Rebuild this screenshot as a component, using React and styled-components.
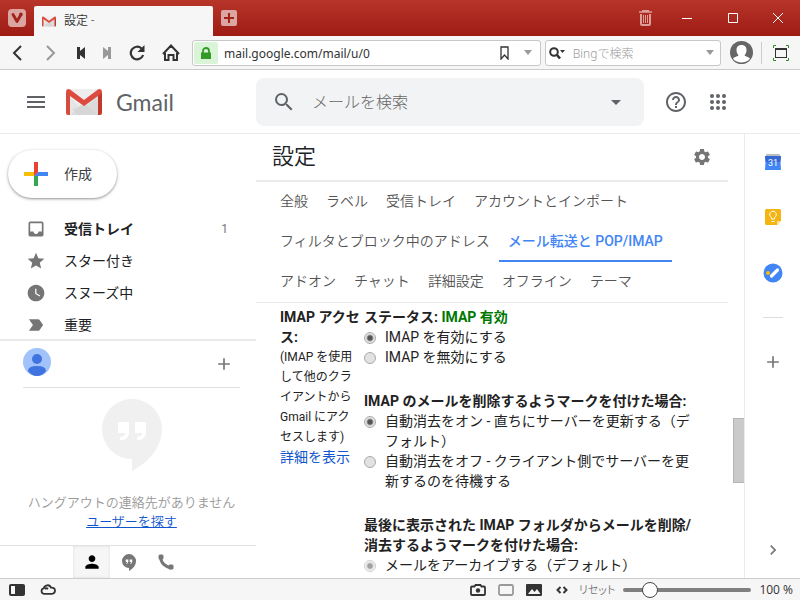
import { useState } from 'react'
import styled, { createGlobalStyle } from 'styled-components'
import {
  MdMenu, MdSearch, MdArrowDropDown, MdHelpOutline, MdInbox, MdStar,
  MdWatchLater, MdLabelImportant, MdSettings, MdPerson, MdAdd, MdChevronRight,
} from 'react-icons/md'

const GlobalStyle = createGlobalStyle`
  * { box-sizing: border-box; }
  body {
    margin: 0;
    background: #fff;
    color: #222;
    font: 14px/20px Roboto, 'Noto Sans CJK JP', sans-serif;
  }
  button, input { font: inherit; color: inherit; }
  button { border: 0; padding: 0; background: none; cursor: pointer; }
  svg { display: block; flex: none; }
`

const Window = styled.div`
  display: flex;
  flex-direction: column;
  height: 100vh;
  overflow: hidden;
`

/* ---- browser frame ---- */

const TitleBar = styled.div`
  display: flex;
  align-items: center;
  height: 36px;
  flex: none;
  padding-left: 8px;
  background: linear-gradient(#b73529, #9e1b15);
`

const Tab = styled.div`
  display: flex;
  align-items: center;
  align-self: flex-end;
  gap: 8px;
  width: 179px;
  height: 30px;
  margin: 0 8px;
  padding-left: 8px;
  border-radius: 2px 2px 0 0;
  background: #f6f6f6;
  color: #333;
  font-size: 12px;
  font-weight: 350;
`

const Spacer = styled.div`
  flex: 1;
`

const WindowButton = styled.button`
  display: flex;
  align-items: center;
  justify-content: center;
  width: ${(p) => p.$width || 46}px;
  height: 36px;
`

const ToolBar = styled.div`
  display: flex;
  align-items: center;
  flex: none;
  height: 34px;
  border-bottom: 1px solid #ccc;
  background: #f6f6f6;
`

const ToolButton = styled.button`
  display: flex;
  align-items: center;
  justify-content: center;
  width: ${(p) => p.$width || 34}px;
  height: 32px;
  color: ${(p) => (p.$dim ? '#999' : '#333')};
`

const Field = styled.div`
  display: flex;
  align-items: center;
  flex: ${(p) => p.$grow} 1 0;
  min-width: 0;
  height: 26px;
  margin-left: 4px;
  padding: 1px;
  border: 1px solid #c8c8c8;
  border-radius: 3px;
  background: #fff;
`

const Lock = styled.div`
  display: flex;
  align-items: center;
  justify-content: center;
  width: 24px;
  height: 22px;
  border-radius: 2px;
  background: #daf4d8;
`

const FieldInput = styled.input`
  flex: 1;
  min-width: 0;
  margin-left: 6px;
  padding: 2px 0 0;
  border: 0;
  outline: 0;
  background: none;
  color: #333;
  font: 12px/20px 'Noto Sans', 'Noto Sans CJK JP', sans-serif;
  &::placeholder { color: #999; opacity: 1; font-weight: 300; }
`

const Divider = styled.div`
  width: 1px;
  height: 22px;
  background: #ccc;
`

const StatusBar = styled.footer`
  display: flex;
  align-items: center;
  flex: none;
  height: 22px;
  padding-right: 7px;
  border-top: 1px solid #ccc;
  background: #f6f6f6;
  color: #333;
  font: 12px/20px 'Open Sans', 'Noto Sans CJK JP', sans-serif;
`

const StatusButton = styled.button`
  display: flex;
  align-items: center;
  justify-content: center;
  width: ${(p) => p.$width || 28}px;
  height: 21px;
`

const ResetButton = styled.button`
  margin: 0 8px 0 3px;
  color: #777;
  font-size: 11px;
  font-weight: 350;
  font-feature-settings: 'palt';
`

const Zoom = styled.input`
  width: 128px;
  height: 18px;
  margin: 0 8px 0 0;
  appearance: none;
  background: none;
  &::-webkit-slider-runnable-track {
    height: 4px;
    border-radius: 2px;
    background: #808080;
  }
  &::-webkit-slider-thumb {
    appearance: none;
    width: 16px;
    height: 16px;
    margin-top: -6px;
    border: 1px solid #444;
    border-radius: 50%;
    background: #fff;
  }
`

/* ---- mail header ---- */

const Header = styled.header`
  display: flex;
  align-items: center;
  flex: none;
  height: 64px;
  border-bottom: 1px solid #ebebeb;
  color: #5f6368;
`

const Brand = styled.div`
  display: flex;
  align-items: center;
  flex: none;
  width: 256px;
  padding-left: 24px;
`

const BrandLink = styled.a`
  display: flex;
  align-items: center;
  gap: 14px;
  margin-left: 18px;
  color: #5f6368;
  font: 23px/28px Lato, sans-serif;
  text-decoration: none;
`

const SearchBox = styled.form`
  display: flex;
  align-items: center;
  flex: 1;
  min-width: 0;
  height: 48px;
  padding: 0 16px;
  border-radius: 8px;
  background: #f1f3f4;
`

const SearchInput = styled.input`
  flex: 1;
  min-width: 0;
  margin-left: 16px;
  padding: 2px 0 0;
  border: 0;
  outline: 0;
  background: none;
  font-size: 16px;
  line-height: 24px;
  &::placeholder { color: #666; opacity: 1; font-weight: 300; }
`

const HeaderTools = styled.div`
  display: flex;
  gap: 18px;
  flex: none;
  width: 156px;
  padding-left: 20px;
`

/* ---- sidebar ---- */

const Body = styled.div`
  display: flex;
  flex: 1;
  min-height: 0;
`

const Sidebar = styled.aside`
  display: flex;
  flex-direction: column;
  flex: none;
  width: 256px;
`

const Compose = styled.button`
  display: flex;
  align-items: center;
  align-self: flex-start;
  gap: 16px;
  flex: none;
  height: 48px;
  margin: 16px 0 15px 8px;
  padding: 0 25px 0 16px;
  border-radius: 24px;
  background: #fff;
  box-shadow: 0 1px 2px rgba(60, 64, 67, 0.4), 0 1px 3px 1px rgba(60, 64, 67, 0.15);
  color: #3c4043;
`

const Folders = styled.nav`
  flex: 1;
  min-height: 0;
  overflow: hidden;
`

const Folder = styled.a`
  display: flex;
  align-items: center;
  height: 32px;
  padding: 0 28px 0 26px;
  color: #202124;
  font-weight: ${(p) => (p.$active ? 700 : 400)};
  text-decoration: none;
  svg { color: #757575; }
`

const FolderName = styled.span`
  flex: 1;
  margin-left: 18px;
`

const Count = styled.span`
  color: #757575;
  font-size: 12px;
  font-weight: 400;
`

const Hangouts = styled.section`
  flex: none;
  border-top: 2px solid #ebebeb;
  text-align: center;
`

const HangoutsHead = styled.div`
  display: flex;
  justify-content: space-between;
  height: 47px;
  margin: 0 16px 11px 23px;
  padding: 7px 6px 0 0;
  border-bottom: 1px solid #e0e0e0;
  color: #777;
`

const AddButton = styled.button`
  height: 32px;
`

const HangoutsLogo = styled.div`
  display: flex;
  justify-content: center;
  padding-left: 8px;
`

const Empty = styled.p`
  margin: 22px 0 14px;
  padding-left: 7px;
  color: #999;
  font-size: 13px;
  font-weight: 350;
  line-height: 19px;
  a { color: #15c; }
`

const HangoutsTabs = styled.div`
  display: flex;
  height: 33px;
  padding-left: 73px;
  border-top: 1px solid #e0e0e0;
  color: #777;
`

const HangoutsTab = styled.button`
  display: flex;
  align-items: center;
  justify-content: center;
  width: 37px;
  ${(p) => p.$active && `
    background: #f6f6f6;
    box-shadow: inset 0 0 3px #ddd;
    color: #000;
  `}
`

/* ---- settings ---- */

const Main = styled.main`
  flex: 1;
  min-width: 0;
  overflow: hidden;
`

const TitleRow = styled.div`
  display: flex;
  align-items: center;
  justify-content: space-between;
  height: 48px;
  padding: 0 16px;
  border-bottom: 2px solid #ebebeb;
  color: #757575;
`

const Title = styled.h1`
  margin: 0;
  color: #202124;
  font-size: 22px;
  font-weight: 350;
  line-height: 28px;
`

const Tabs = styled.nav`
  display: flex;
  flex-wrap: wrap;
  padding-left: 15px;
  border-bottom: 1px solid #ebebeb;
`

const TabLink = styled.a`
  height: 40px;
  padding: 9px 9px 0;
  color: ${(p) => (p.$active ? '#4285f4' : '#555')};
  border-bottom: 2px solid ${(p) => (p.$active ? '#4285f4' : 'transparent')};
  font-weight: ${(p) => (p.$active ? 500 : 350)};
  text-decoration: none;
`

const Settings = styled.div`
  display: grid;
  grid-template-columns: 82px 1fr;
  column-gap: 2px;
  padding: 4px 28px 0 24px;
  color: #222;
`

const About = styled.div`
  a { color: #15c; text-decoration: none; }
`

const AboutTitle = styled.h2`
  margin: 0;
  font-size: 14px;
  line-height: 20px;
`

const Hint = styled.p`
  margin: 0;
  padding-right: 6px;
  font-size: 12px;
`

const Group = styled.fieldset`
  min-width: 0;
  margin: 0 0 24px;
  padding: 0;
  border: 0;
`

const Legend = styled.legend`
  padding: 0;
  font-weight: 700;
`

const Status = styled.span`
  color: #007700;
`

const Option = styled.label`
  display: flex;
  gap: 9px;
  padding-right: 4px;
`

const Radio = styled.input`
  appearance: none;
  flex: none;
  width: 12px;
  height: 12px;
  margin: 5px 0 0;
  border: 1px solid #aaa;
  border-radius: 50%;
  background: #e2e2e2;
  &:checked { background: radial-gradient(circle, #555 0 2px, #e6e6e6 4px); }
  &:disabled { opacity: 0.55; }
`

const Scrollbar = styled.div`
  display: flex;
  flex-direction: column;
  flex: none;
  width: 16px;
  padding-left: 5px;
  &::before { content: ''; flex: 3; }
  &::after { content: ''; flex: 1; }
`

const Thumb = styled.div`
  height: 65px;
  border: 1px solid #b5b5b5;
  border-right: 0;
  background: #cacaca;
`

const SidePanel = styled.aside`
  display: flex;
  flex-direction: column;
  align-items: center;
  flex: none;
  width: 56px;
  padding: 19px 0 18px;
  border-left: 1px solid #ebebeb;
  color: #777;
`

const Apps = styled.div`
  display: flex;
  flex-direction: column;
  align-items: center;
  gap: 38px;
`

const PanelRule = styled.hr`
  width: 20px;
  margin: 34px 0;
  border: 0;
  border-top: 1px solid #ddd;
`

/* ---- drawings ---- */

function MailLogo({ width, height }) {
  return (
    <svg width={width} height={height} viewBox="0 0 36 26">
      <path d="M2 0h32v26H2z" fill="#eee" />
      <path d="M4 26 18 13l14 13z" fill="#ddd" />
      <path d="M4 8l9 9-9 9zM32 8l-9 9 9 9z" fill="#e6e6e6" />
      <path d="M18 16 32 6v20H12l-6-6z" fill="#d0d0d0" opacity=".5" />
      <path d="M0 3v21q0 2 2 2h2V6z" fill="#d54b3d" />
      <path d="M36 3v21q0 2-2 2h-2V6z" fill="#c0392b" />
      <path d="M0 2.5Q0 0 2.4 0q1 0 2 .8L18 11 31.6 .8q1-.8 2-.8Q36 0 36 2.5q0 1.5-1.2 2.5L18 17 1.2 5Q0 4 0 2.5z" fill="#dd4b3e" />
    </svg>
  )
}

function VivaldiLogo() {
  return (
    <svg width="18" height="18" viewBox="0 0 18 18">
      <rect width="18" height="18" rx="4" fill="#dba5a1" />
      <path d="M5 5.5 9 12.5l3.8-6.8" fill="none" stroke="#a3231b" strokeWidth="2.8" strokeLinecap="round" strokeLinejoin="round" />
      <circle cx="12.9" cy="5.4" r="1.8" fill="#a3231b" />
    </svg>
  )
}

function HangoutsIcon({ width, height, color, quote }) {
  return (
    <svg width={width} height={height} viewBox="0 0 60 72">
      <path d="M30 0a30 30 0 0 1 30 30c0 18-13 33-30 42V60A30 30 0 0 1 30 0z" fill={color} />
      <path d="M16 23h11v10q0 8-9 8.5V38q5-.5 5-4h-7zM33 23h11v10q0 8-9 8.5V38q5-.5 5-4h-7z" fill={quote} />
    </svg>
  )
}

function PhoneIcon() {
  return (
    <svg width="16" height="16" viewBox="0 0 16 16">
      <path d="M2.5 2.5Q3 8 6 10.5T13 14" fill="none" stroke="#777" strokeWidth="3" />
      <rect x=".5" y=".5" width="5" height="5" rx="1.5" fill="#777" />
      <rect x="10.5" y="10.5" width="5" height="5" rx="1.5" fill="#777" />
    </svg>
  )
}

function ComposePlus() {
  return (
    <svg width="24" height="24" viewBox="0 0 24 24">
      <path d="M10 0h4v10l-4 4z" fill="#ea4335" />
      <path d="M0 10h10v4H0z" fill="#fbbc04" />
      <path d="M10 14h4v10h-4z" fill="#34a853" />
      <path d="M14 10h10v4H10z" fill="#4285f4" />
      <path d="M10 10h4l-4 4z" fill="#ea4335" />
    </svg>
  )
}

function AppsIcon() {
  return (
    <svg width="24" height="24" viewBox="0 0 24 24" fill="currentColor">
      {[6, 12, 18].map((y) => [6, 12, 18].map((x) => <circle key={`${x}-${y}`} cx={x} cy={y} r="2" />))}
    </svg>
  )
}

function Caret() {
  return <svg width="8" height="5" viewBox="0 0 8 5"><path d="M0 0h8L4 5z" fill="#999" /></svg>
}

function CalendarIcon() {
  return (
    <svg width="16" height="18" viewBox="0 0 16 18">
      <path d="M1 2q0-1 1-1h12q1 0 1 1v3H1z" fill="#bdbdbd" />
      <path d="M0 3h16l-.6 5 .6 9H0l.6-9z" fill="#4285f4" />
      <path d="M0 3h16l-.6 6H.6z" fill="#3467d6" />
      <text x="8" y="13" fill="#fff" fontSize="9" fontFamily="Roboto" textAnchor="middle">31</text>
    </svg>
  )
}

function KeepIcon() {
  return (
    <svg width="16" height="16" viewBox="0 0 16 16">
      <path d="M1 0h14l1 1v11l-4 4H1l-1-1V1z" fill="#f4b512" />
      <path d="M12 16v-4h4z" fill="#fde49a" />
      <path d="M6.5 10V8.5a3.3 3.3 0 1 1 3 0V10zM6.5 12.5h3" fill="none" stroke="#fff" />
    </svg>
  )
}

function TasksIcon() {
  return (
    <svg width="20" height="20" viewBox="0 0 20 20">
      <circle cx="10" cy="10" r="9.5" fill="#4285f4" />
      <circle cx="5" cy="10" r="2" fill="#fbbc04" />
      <path d="M8.5 13 14.5 7" stroke="#fff" strokeWidth="3.2" strokeLinecap="round" />
    </svg>
  )
}

const folders = [
  { name: '受信トレイ', Icon: MdInbox, count: 1, active: true },
  { name: 'スター付き', Icon: MdStar },
  { name: 'スヌーズ中', Icon: MdWatchLater },
  { name: '重要', Icon: MdLabelImportant },
]

const tabs = [
  '全般', 'ラベル', '受信トレイ', 'アカウントとインポート',
  'フィルタとブロック中のアドレス', 'メール転送と POP/IMAP',
  'アドオン', 'チャット', '詳細設定', 'オフライン', 'テーマ',
]

function BrowserTop() {
  return (
    <>
      <TitleBar>
        <WindowButton $width={18} aria-label="Vivaldi"><VivaldiLogo /></WindowButton>
        <Tab><MailLogo width={14} height={11} />設定 -</Tab>
        <WindowButton $width={16} aria-label="新しいタブ">
          <svg width="16" height="16" viewBox="0 0 16 16">
            <rect width="16" height="16" rx="2" fill="#dba5a1" />
            <path d="M8 3v10M3 8h10" stroke="#a3231b" strokeWidth="2" />
          </svg>
        </WindowButton>
        <Spacer />
        <WindowButton $width={38} aria-label="ゴミ箱">
          <svg width="13" height="16" viewBox="0 0 13 16" fill="none" stroke="#dd9d98">
            <path d="M0 2h13M3 .5h7" strokeWidth="1.6" />
            <path d="M2 4v10q0 1 1 1h7q1 0 1-1V4" strokeWidth="2" />
            <path d="M4.5 5v8M6.5 5v8M8.5 5v8" />
          </svg>
        </WindowButton>
        <WindowButton aria-label="最小化">
          <svg width="10" height="10"><path d="M0 5.5h10" stroke="#fff" /></svg>
        </WindowButton>
        <WindowButton aria-label="最大化">
          <svg width="10" height="10"><path d="M.5.5h9v9h-9z" fill="none" stroke="#fff" /></svg>
        </WindowButton>
        <WindowButton $width={44} aria-label="閉じる">
          <svg width="10" height="10"><path d="M0 0l10 10M10 0 0 10" stroke="#fff" /></svg>
        </WindowButton>
      </TitleBar>
      <ToolBar>
        <ToolButton aria-label="戻る">
          <svg width="10" height="16" fill="none"><path d="M9 1 2 8l7 7" stroke="currentColor" strokeWidth="2" /></svg>
        </ToolButton>
        <ToolButton $dim aria-label="進む">
          <svg width="10" height="16" fill="none"><path d="m1 1 7 7-7 7" stroke="currentColor" strokeWidth="2" /></svg>
        </ToolButton>
        <ToolButton $width={26} aria-label="最初へ">
          <svg width="8" height="12" fill="currentColor"><path d="M0 0h3v4l5-4v12L3 8v4H0z" /></svg>
        </ToolButton>
        <ToolButton $width={26} $dim aria-label="最後へ">
          <svg width="8" height="12" fill="currentColor"><path d="M8 0H5v4L0 0v12l5-4v4h3z" /></svg>
        </ToolButton>
        <ToolButton aria-label="再読み込み">
          <svg width="16" height="16" fill="none">
            <path d="M12.5 3.5a6.3 6.3 0 1 0 1.6 6.5" stroke="currentColor" strokeWidth="2.2" />
            <path d="M15.5 0v7h-7z" fill="currentColor" />
          </svg>
        </ToolButton>
        <ToolButton aria-label="ホーム">
          <svg width="18" height="17" fill="none" stroke="currentColor" strokeWidth="2">
            <path d="M1 10 9 1.5 17 10M3 9v7h3.5v-5h5v5H15V9" />
          </svg>
        </ToolButton>
        <Field $grow={2}>
          <Lock>
            <svg width="10" height="12" fill="none">
              <path d="M0 5.5h10V12H0z" fill="#339a27" />
              <path d="M2 6V4a3 3 0 0 1 6 0v2" stroke="#339a27" strokeWidth="1.8" />
            </svg>
          </Lock>
          <FieldInput aria-label="アドレス" defaultValue="mail.google.com/mail/u/0" />
          <ToolButton $width={24} aria-label="ブックマーク">
            <svg width="9" height="14" fill="none"><path d="M1 1h7v12l-3.5-4L1 13z" stroke="currentColor" strokeWidth="1.3" /></svg>
          </ToolButton>
          <ToolButton $width={22} aria-label="履歴"><Caret /></ToolButton>
        </Field>
        <Field $grow={1}>
          <ToolButton $width={20} aria-label="検索エンジン">
            <svg width="16" height="12" fill="none" stroke="currentColor">
              <circle cx="5" cy="5" r="3.8" strokeWidth="2" />
              <path d="m8 8 3 3.5" strokeWidth="2.6" />
              <path d="M11 3h5l-2.5 3z" fill="currentColor" stroke="none" />
            </svg>
          </ToolButton>
          <FieldInput aria-label="ウェブ検索" placeholder="Bingで検索" />
          <ToolButton $width={18} aria-label="検索候補"><Caret /></ToolButton>
        </Field>
        <ToolButton $width={40} aria-label="プロフィール">
          <svg width="23" height="23" viewBox="0 0 23 23">
            <circle cx="11.5" cy="11.5" r="11.5" fill="#666" />
            <path d="M11.5 4c3.5 0 5 2.2 5 5.2 0 2.2-1 4-2 5 .3 1 4.2 1.5 5.5 3.5a11.5 11.5 0 0 1-17 0c1.3-2 5.2-2.5 5.5-3.5-1-1-2-2.8-2-5C6.5 6.2 8 4 11.5 4z" fill="#fff" />
          </svg>
        </ToolButton>
        <Divider />
        <ToolButton $width={38} aria-label="全画面">
          <svg width="16" height="16" viewBox="0 0 16 16" fill="none">
            <path d="M.5 3V.5H3M13 .5h2.500V3M.5 13v2.500H3M13 15.500h2.500V13" stroke="#2f8a25" />
            <path d="M2 3h12v10H2z" fill="#333" />
            <path d="M3 5h10v7H3z" fill="#f6f6f6" />
          </svg>
        </ToolButton>
      </ToolBar>
    </>
  )
}

function HangoutsPanel() {
  return (
    <Hangouts>
      <HangoutsHead>
        <svg width="28" height="28" viewBox="0 0 28 28">
          <circle cx="14" cy="14" r="14" fill="#a1c2fa" />
          <circle cx="14" cy="11" r="5" fill="#3f73df" />
          <path d="M5 23q0-5 9-5t9 5q-3.5 5-9 5t-9-5z" fill="#3f73df" />
        </svg>
        <AddButton aria-label="新しい会話"><MdAdd size={20} /></AddButton>
      </HangoutsHead>
      <HangoutsLogo><HangoutsIcon width={60} height={72} color="#f0f0f0" quote="#fff" /></HangoutsLogo>
      <Empty>
        ハングアウトの連絡先がありません<br />
        <a href="#find">ユーザーを探す</a>
      </Empty>
      <HangoutsTabs>
        <HangoutsTab $active aria-label="連絡先"><MdPerson size={20} /></HangoutsTab>
        <HangoutsTab aria-label="会話"><HangoutsIcon width={14} height={17} color="#777" quote="#fff" /></HangoutsTab>
        <HangoutsTab aria-label="電話"><PhoneIcon /></HangoutsTab>
      </HangoutsTabs>
    </Hangouts>
  )
}

function ImapSettings() {
  const [access, setAccess] = useState('on')
  const [expunge, setExpunge] = useState('auto')

  return (
    <Settings>
      <About>
        <AboutTitle>IMAP アクセス:</AboutTitle>
        <Hint>(IMAP を使用して他のクライアントから Gmail にアクセスします)</Hint>
        <a href="#more">詳細を表示</a>
      </About>
      <div>
        <Group>
          <Legend>ステータス: <Status>IMAP 有効</Status></Legend>
          <Option>
            <Radio type="radio" name="access" checked={access === 'on'} onChange={() => setAccess('on')} />
            IMAP を有効にする
          </Option>
          <Option>
            <Radio type="radio" name="access" checked={access === 'off'} onChange={() => setAccess('off')} />
            IMAP を無効にする
          </Option>
        </Group>
        <Group>
          <Legend>IMAP のメールを削除するようマークを付けた場合:</Legend>
          <Option>
            <Radio type="radio" name="expunge" checked={expunge === 'auto'} onChange={() => setExpunge('auto')} />
            自動消去をオン - 直ちにサーバーを更新する（デフォルト）
          </Option>
          <Option>
            <Radio type="radio" name="expunge" checked={expunge === 'wait'} onChange={() => setExpunge('wait')} />
            自動消去をオフ - クライアント側でサーバーを更新するのを待機する
          </Option>
        </Group>
        <Group>
          <Legend>最後に表示された IMAP フォルダからメールを削除/消去するようマークを付けた場合:</Legend>
          <Option>
            <Radio type="radio" name="last" defaultChecked disabled />
            メールをアーカイブする（デフォルト）
          </Option>
        </Group>
      </div>
    </Settings>
  )
}

function BrowserStatus() {
  return (
    <StatusBar>
      <StatusButton $width={34} aria-label="パネル">
        <svg width="16" height="12"><rect width="16" height="12" rx="2" fill="#333" /><path d="M2 2h4v8H2z" fill="#f6f6f6" /></svg>
      </StatusButton>
      <StatusButton aria-label="同期">
        <svg width="16" height="11" fill="none"><path d="M4 9.8a2.8 2.8 0 0 1-.3-5.5C4.5 1 9.5-.2 11 3.6c2.5-.3 4 1.2 4 3 0 2-1.5 3.2-3 3.2zM5 5q1.5-1.5 3 0" stroke="#333" strokeWidth="1.8" /></svg>
      </StatusButton>
      <Spacer />
      <StatusButton aria-label="キャプチャ">
        <svg width="16" height="12" fill="none"><path d="M1 3.5q0-1 1-1h2.500L5.500 1h5l1 1.500H14q1 0 1 1V10q0 1-1 1H2q-1 0-1-1z" stroke="#333" strokeWidth="1.8" /><circle cx="8" cy="6.5" r="2.2" fill="#333" /></svg>
      </StatusButton>
      <StatusButton aria-label="タイリング">
        <svg width="16" height="12" fill="none"><rect x="1" y="1" width="14" height="10" rx="1.5" stroke="#999" strokeWidth="1.8" /></svg>
      </StatusButton>
      <StatusButton aria-label="画像">
        <svg width="16" height="12"><rect width="16" height="12" rx="1" fill="#333" /><path d="m2 10 4-5 2.500 3L11 5l3.500 5z" fill="#f6f6f6" /></svg>
      </StatusButton>
      <StatusButton aria-label="ページアクション">
        <svg width="12" height="8" fill="none"><path d="M4.5 1 1.5 4l3 3M7.5 1l3 3-3 3" stroke="#333" strokeWidth="2" /></svg>
      </StatusButton>
      <ResetButton>リセット</ResetButton>
      <Zoom type="range" min="20" max="500" defaultValue="100" aria-label="ズーム" />
      <span>100 %</span>
    </StatusBar>
  )
}

export default function App() {
  return (
    <Window>
      <GlobalStyle />
      <BrowserTop />
      <Header>
        <Brand>
          <button aria-label="メインメニュー"><MdMenu size={24} /></button>
          <BrandLink href="#inbox"><MailLogo width={36} height={26} />Gmail</BrandLink>
        </Brand>
        <SearchBox>
          <button type="button" aria-label="検索"><MdSearch size={24} /></button>
          <SearchInput aria-label="メールを検索" placeholder="メールを検索" />
          <button type="button" aria-label="検索オプション"><MdArrowDropDown size={24} /></button>
        </SearchBox>
        <HeaderTools>
          <button aria-label="ヘルプ"><MdHelpOutline size={24} /></button>
          <button aria-label="アプリ"><AppsIcon /></button>
        </HeaderTools>
      </Header>
      <Body>
        <Sidebar>
          <Compose><ComposePlus />作成</Compose>
          <Folders>
            {folders.map(({ name, Icon, count, active }) => (
              <Folder key={name} href="#folder" $active={active}>
                <Icon size={20} />
                <FolderName>{name}</FolderName>
                {count && <Count>{count}</Count>}
              </Folder>
            ))}
          </Folders>
          <HangoutsPanel />
        </Sidebar>
        <Main>
          <TitleRow>
            <Title>設定</Title>
            <button aria-label="設定"><MdSettings size={20} /></button>
          </TitleRow>
          <Tabs>
            {tabs.map((tab) => (
              <TabLink key={tab} href="#settings" $active={tab.includes('POP/IMAP')}>{tab}</TabLink>
            ))}
          </Tabs>
          <ImapSettings />
        </Main>
        <Scrollbar><Thumb /></Scrollbar>
        <SidePanel>
          <Apps>
            <button aria-label="カレンダー"><CalendarIcon /></button>
            <button aria-label="Keep"><KeepIcon /></button>
            <button aria-label="ToDo リスト"><TasksIcon /></button>
          </Apps>
          <PanelRule />
          <button aria-label="アドオンを取得"><MdAdd size={20} /></button>
          <Spacer />
          <button aria-label="サイドパネルを非表示"><MdChevronRight size={20} /></button>
        </SidePanel>
      </Body>
      <BrowserStatus />
    </Window>
  )
}
